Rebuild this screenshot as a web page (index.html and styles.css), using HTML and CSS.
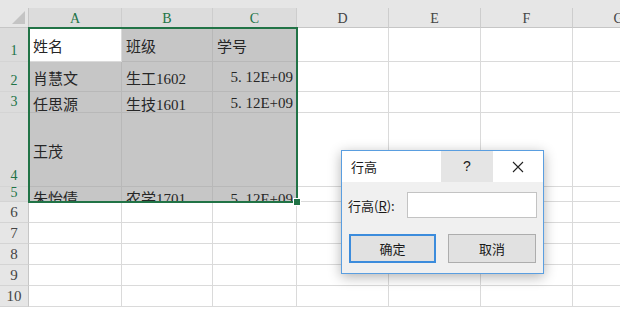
FILE: index.html
```html
<!DOCTYPE html>
<html>
    <head>
        <title>行高</title>
        <link rel="stylesheet" href="styles.css">
    </head>
    <body>
        <div class="topbar"></div>
        <div class="sheet">
            <!-- header row -->
            <div class="corner"><span class="tri"></span></div>
            <div class="colhead sel">A</div>
            <div class="colhead sel">B</div>
            <div class="colhead sel">C</div>
            <div class="colhead">D</div>
            <div class="colhead">E</div>
            <div class="colhead">F</div>
            <div class="colhead">G</div>

            <!-- row 1 -->
            <div class="rowhead sel">1</div>
            <div class="cell active">姓名</div>
            <div class="cell fill">班级</div>
            <div class="cell fill">学号</div>
            <div class="cell"></div><div class="cell"></div><div class="cell"></div><div class="cell"></div>

            <!-- row 2 -->
            <div class="rowhead sel">2</div>
            <div class="cell fill">肖慧文</div>
            <div class="cell fill">生工1602</div>
            <div class="cell fill num">5. 12E+09</div>
            <div class="cell"></div><div class="cell"></div><div class="cell"></div><div class="cell"></div>

            <!-- row 3 -->
            <div class="rowhead sel">3</div>
            <div class="cell fill">任思源</div>
            <div class="cell fill">生技1601</div>
            <div class="cell fill num">5. 12E+09</div>
            <div class="cell"></div><div class="cell"></div><div class="cell"></div><div class="cell"></div>

            <!-- row 4 -->
            <div class="rowhead sel">4</div>
            <div class="cell fill">王茂</div>
            <div class="cell fill"></div>
            <div class="cell fill"></div>
            <div class="cell"></div><div class="cell"></div><div class="cell"></div><div class="cell"></div>

            <!-- row 5 (too short for its text) -->
            <div class="rowhead sel short">5</div>
            <div class="cell fill clip">朱怡倩</div>
            <div class="cell fill clip">农学1701</div>
            <div class="cell fill clip num">5. 12E+09</div>
            <div class="cell"></div><div class="cell"></div><div class="cell"></div><div class="cell"></div>

            <div class="rowhead">6</div>
            <div class="cell"></div><div class="cell"></div><div class="cell"></div><div class="cell"></div><div class="cell"></div><div class="cell"></div><div class="cell"></div>
            <div class="rowhead">7</div>
            <div class="cell"></div><div class="cell"></div><div class="cell"></div><div class="cell"></div><div class="cell"></div><div class="cell"></div><div class="cell"></div>
            <div class="rowhead">8</div>
            <div class="cell"></div><div class="cell"></div><div class="cell"></div><div class="cell"></div><div class="cell"></div><div class="cell"></div><div class="cell"></div>
            <div class="rowhead">9</div>
            <div class="cell"></div><div class="cell"></div><div class="cell"></div><div class="cell"></div><div class="cell"></div><div class="cell"></div><div class="cell"></div>
            <div class="rowhead">10</div>
            <div class="cell"></div><div class="cell"></div><div class="cell"></div><div class="cell"></div><div class="cell"></div><div class="cell"></div><div class="cell"></div>

            <div class="selection"><span class="handle"></span></div>
        </div>

        <div class="dialog">
            <div class="dlg-title">
                <span class="dlg-name">行高</span>
                <div class="dlg-help">?</div>
                <div class="dlg-close">
                    <svg width="12" height="12" viewBox="0 0 12 12">
                        <path d="M1 1 L11 11 M11 1 L1 11" stroke="#222" stroke-width="1.1" fill="none"/>
                    </svg>
                </div>
            </div>
            <div class="dlg-body">
                <div class="dlg-row">
                    <span class="dlg-label">行高(<u>R</u>):</span>
                    <div class="dlg-input"></div>
                </div>
                <div class="dlg-buttons">
                    <div class="btn btn-ok">确定</div>
                    <div class="btn">取消</div>
                </div>
            </div>
        </div>
    </body>
</html>
```

FILE: styles.css
```css
body {
    margin: 0;
    background-color: #ffffff;
    width: 620px;
    height: 309px;
    overflow: hidden;
    position: relative;
    font-family: "Liberation Serif", "Noto Sans CJK SC", serif;
}
.topbar {
    height: 8px;
    background-color: #e6e6e6;
}
.sheet {
    position: relative;
    display: grid;
    grid-template-columns: 29px 93px 91px 84px 92px 92px 92px 92px;
    grid-template-rows: 20px 34px 30px 21px 74px 15px 21px 21px 21px 21px 21px;
    width: 620px;
    overflow: hidden;
}
.corner {
    background-color: #e6e6e6;
    border-right: 1px solid #c6c6c6;
    border-bottom: 1px solid #c6c6c6;
    position: relative;
}
.tri {
    position: absolute;
    right: 3px;
    bottom: 3px;
    width: 0;
    height: 0;
    border-left: 13px solid transparent;
    border-bottom: 13px solid #c4c4c4;
}
.colhead {
    background-color: #e6e6e6;
    border-right: 1px solid #cdcdcd;
    border-bottom: 1px solid #c6c6c6;
    color: #444;
    font-size: 14px;
    display: flex;
    align-items: center;
    justify-content: center;
    padding-top: 3px;
}
.colhead.sel {
    background-color: #dcdcdc;
    color: #217346;
}
.rowhead {
    background-color: #e6e6e6;
    border-right: 1px solid #c6c6c6;
    border-bottom: 1px solid #d4d4d4;
    color: #444;
    font-size: 15px;
    display: flex;
    align-items: flex-end;
    justify-content: center;
    line-height: 18px;
    padding-bottom: 1px;
    overflow: hidden;
}
.rowhead.sel {
    background-color: #dcdcdc;
    color: #217346;
    font-size: 14px;
}
.rowhead.short {
    align-items: flex-start;
    line-height: 12px;
}
.cell {
    border-right: 1px solid #dadada;
    border-bottom: 1px solid #dadada;
    font-size: 15px;
    color: #262626;
    display: flex;
    align-items: center;
    padding: 2px 3px 0 4px;
    white-space: nowrap;
    overflow: hidden;
}
.cell.fill {
    background-color: #c6c6c6;
    border-color: #b8b8b8;
}
.cell.active {
    background-color: #ffffff;
}
.cell.num {
    justify-content: flex-end;
    padding-right: 3px;
}
.cell.clip {
    align-items: flex-start;
    padding-top: 2px;
    line-height: 20px;
}
.selection {
    position: absolute;
    left: 28px;
    top: 19px;
    width: 270px;
    height: 176px;
    border: 2px solid #217346;
    box-sizing: border-box;
}
.handle {
    position: absolute;
    right: -5px;
    bottom: -5px;
    width: 6px;
    height: 6px;
    background-color: #217346;
    border: 1px solid #ffffff;
}
.dialog {
    position: absolute;
    left: 341px;
    top: 150px;
    width: 203px;
    height: 124px;
    box-sizing: border-box;
    border: 1px solid #5a9ee0;
    background-color: #f0f0f0;
    box-shadow: 0 3px 12px rgba(0, 0, 0, 0.3);
    font-family: "Noto Sans CJK SC", sans-serif;
    font-size: 13px;
    color: #1a1a1a;
}
.dlg-title {
    display: flex;
    height: 31px;
    background-color: #ffffff;
}
.dlg-name {
    flex: 1;
    padding-left: 9px;
    line-height: 31px;
}
.dlg-help {
    width: 52px;
    background-color: #e5e5e5;
    text-align: center;
    line-height: 31px;
    font-family: "Liberation Sans", sans-serif;
    font-size: 14px;
}
.dlg-close {
    width: 50px;
    display: flex;
    align-items: center;
    justify-content: center;
}
.dlg-body {
    padding: 10px 6px 0 6px;
}
.dlg-row {
    display: flex;
    align-items: center;
    justify-content: space-between;
}
.dlg-input {
    width: 130px;
    height: 26px;
    box-sizing: border-box;
    background-color: #ffffff;
    border: 1px solid #c3c3c3;
}
.dlg-buttons {
    display: flex;
    gap: 12px;
    margin-top: 16px;
    padding-left: 1px;
}
.btn {
    width: 88px;
    height: 29px;
    box-sizing: border-box;
    background-color: #e1e1e1;
    border: 1px solid #adadad;
    display: flex;
    align-items: center;
    justify-content: center;
}
.btn-ok {
    width: 87px;
    border: 2px solid #3c8cdc;
}
```
